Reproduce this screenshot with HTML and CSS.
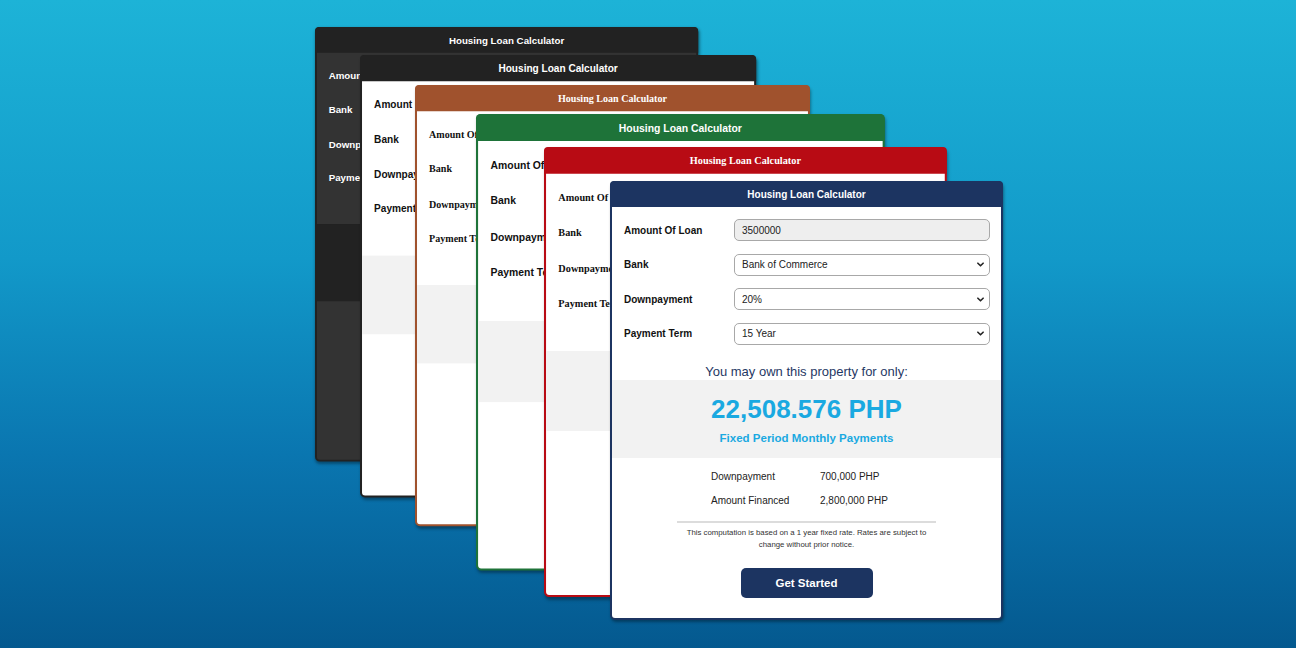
FILE: index.html
```html
<!DOCTYPE html>
<html lang="en">
<head>
<meta charset="utf-8">
<title>Housing Loan Calculator themes</title>
<link rel="stylesheet" href="styles.css">
</head>
<body>
<main class="stage">

  <section class="card theme-dark pos-1">
    <header class="card-head">Housing Loan Calculator</header>
    <div class="form">
      <div class="row"><span class="lbl">Amount Of Loan</span><div class="field field-ro">3500000</div></div>
      <div class="row"><span class="lbl">Bank</span><div class="field">Bank of Commerce<svg class="chev" viewBox="0 0 8 5" width="7" height="5"><path d="M1 1l3 3 3-3"/></svg></div></div>
      <div class="row"><span class="lbl">Downpayment</span><div class="field">20%<svg class="chev" viewBox="0 0 8 5" width="7" height="5"><path d="M1 1l3 3 3-3"/></svg></div></div>
      <div class="row"><span class="lbl">Payment Term</span><div class="field">15 Year<svg class="chev" viewBox="0 0 8 5" width="7" height="5"><path d="M1 1l3 3 3-3"/></svg></div></div>
    </div>
    <p class="lead">You may own this property for only:</p>
    <div class="band"><div class="amount">22,508.576 PHP</div><div class="sub">Fixed Period Monthly Payments</div></div>
    <div class="details"><span>Downpayment</span><span>700,000 PHP</span><span>Amount Financed</span><span>2,800,000 PHP</span></div>
    <hr class="divider">
    <p class="note">This computation is based on a 1 year fixed rate. Rates are subject to change without prior notice.</p>
    <button class="cta">Get Started</button>
  </section>

  <section class="card theme-black pos-2">
    <header class="card-head">Housing Loan Calculator</header>
    <div class="form">
      <div class="row"><span class="lbl">Amount Of Loan</span><div class="field field-ro">3500000</div></div>
      <div class="row"><span class="lbl">Bank</span><div class="field">Bank of Commerce<svg class="chev" viewBox="0 0 8 5" width="7" height="5"><path d="M1 1l3 3 3-3"/></svg></div></div>
      <div class="row"><span class="lbl">Downpayment</span><div class="field">20%<svg class="chev" viewBox="0 0 8 5" width="7" height="5"><path d="M1 1l3 3 3-3"/></svg></div></div>
      <div class="row"><span class="lbl">Payment Term</span><div class="field">15 Year<svg class="chev" viewBox="0 0 8 5" width="7" height="5"><path d="M1 1l3 3 3-3"/></svg></div></div>
    </div>
    <p class="lead">You may own this property for only:</p>
    <div class="band"><div class="amount">22,508.576 PHP</div><div class="sub">Fixed Period Monthly Payments</div></div>
    <div class="details"><span>Downpayment</span><span>700,000 PHP</span><span>Amount Financed</span><span>2,800,000 PHP</span></div>
    <hr class="divider">
    <p class="note">This computation is based on a 1 year fixed rate. Rates are subject to change without prior notice.</p>
    <button class="cta">Get Started</button>
  </section>

  <section class="card theme-brown serif pos-3">
    <header class="card-head">Housing Loan Calculator</header>
    <div class="form">
      <div class="row"><span class="lbl">Amount Of Loan</span><div class="field field-ro">3500000</div></div>
      <div class="row"><span class="lbl">Bank</span><div class="field">Bank of Commerce<svg class="chev" viewBox="0 0 8 5" width="7" height="5"><path d="M1 1l3 3 3-3"/></svg></div></div>
      <div class="row"><span class="lbl">Downpayment</span><div class="field">20%<svg class="chev" viewBox="0 0 8 5" width="7" height="5"><path d="M1 1l3 3 3-3"/></svg></div></div>
      <div class="row"><span class="lbl">Payment Term</span><div class="field">15 Year<svg class="chev" viewBox="0 0 8 5" width="7" height="5"><path d="M1 1l3 3 3-3"/></svg></div></div>
    </div>
    <p class="lead">You may own this property for only:</p>
    <div class="band"><div class="amount">22,508.576 PHP</div><div class="sub">Fixed Period Monthly Payments</div></div>
    <div class="details"><span>Downpayment</span><span>700,000 PHP</span><span>Amount Financed</span><span>2,800,000 PHP</span></div>
    <hr class="divider">
    <p class="note">This computation is based on a 1 year fixed rate. Rates are subject to change without prior notice.</p>
    <button class="cta">Get Started</button>
  </section>

  <section class="card theme-green pos-4">
    <header class="card-head">Housing Loan Calculator</header>
    <div class="form">
      <div class="row"><span class="lbl">Amount Of Loan</span><div class="field field-ro">3500000</div></div>
      <div class="row"><span class="lbl">Bank</span><div class="field">Bank of Commerce<svg class="chev" viewBox="0 0 8 5" width="7" height="5"><path d="M1 1l3 3 3-3"/></svg></div></div>
      <div class="row"><span class="lbl">Downpayment</span><div class="field">20%<svg class="chev" viewBox="0 0 8 5" width="7" height="5"><path d="M1 1l3 3 3-3"/></svg></div></div>
      <div class="row"><span class="lbl">Payment Term</span><div class="field">15 Year<svg class="chev" viewBox="0 0 8 5" width="7" height="5"><path d="M1 1l3 3 3-3"/></svg></div></div>
    </div>
    <p class="lead">You may own this property for only:</p>
    <div class="band"><div class="amount">22,508.576 PHP</div><div class="sub">Fixed Period Monthly Payments</div></div>
    <div class="details"><span>Downpayment</span><span>700,000 PHP</span><span>Amount Financed</span><span>2,800,000 PHP</span></div>
    <hr class="divider">
    <p class="note">This computation is based on a 1 year fixed rate. Rates are subject to change without prior notice.</p>
    <button class="cta">Get Started</button>
  </section>

  <section class="card theme-red serif pos-5">
    <header class="card-head">Housing Loan Calculator</header>
    <div class="form">
      <div class="row"><span class="lbl">Amount Of Loan</span><div class="field field-ro">3500000</div></div>
      <div class="row"><span class="lbl">Bank</span><div class="field">Bank of Commerce<svg class="chev" viewBox="0 0 8 5" width="7" height="5"><path d="M1 1l3 3 3-3"/></svg></div></div>
      <div class="row"><span class="lbl">Downpayment</span><div class="field">20%<svg class="chev" viewBox="0 0 8 5" width="7" height="5"><path d="M1 1l3 3 3-3"/></svg></div></div>
      <div class="row"><span class="lbl">Payment Term</span><div class="field">15 Year<svg class="chev" viewBox="0 0 8 5" width="7" height="5"><path d="M1 1l3 3 3-3"/></svg></div></div>
    </div>
    <p class="lead">You may own this property for only:</p>
    <div class="band"><div class="amount">22,508.576 PHP</div><div class="sub">Fixed Period Monthly Payments</div></div>
    <div class="details"><span>Downpayment</span><span>700,000 PHP</span><span>Amount Financed</span><span>2,800,000 PHP</span></div>
    <hr class="divider">
    <p class="note">This computation is based on a 1 year fixed rate. Rates are subject to change without prior notice.</p>
    <button class="cta">Get Started</button>
  </section>

  <section class="card theme-navy pos-6">
    <header class="card-head">Housing Loan Calculator</header>
    <div class="form">
      <div class="row"><span class="lbl">Amount Of Loan</span><div class="field field-ro">3500000</div></div>
      <div class="row"><span class="lbl">Bank</span><div class="field">Bank of Commerce<svg class="chev" viewBox="0 0 8 5" width="7" height="5"><path d="M1 1l3 3 3-3"/></svg></div></div>
      <div class="row"><span class="lbl">Downpayment</span><div class="field">20%<svg class="chev" viewBox="0 0 8 5" width="7" height="5"><path d="M1 1l3 3 3-3"/></svg></div></div>
      <div class="row"><span class="lbl">Payment Term</span><div class="field">15 Year<svg class="chev" viewBox="0 0 8 5" width="7" height="5"><path d="M1 1l3 3 3-3"/></svg></div></div>
    </div>
    <p class="lead">You may own this property for only:</p>
    <div class="band"><div class="amount">22,508.576 PHP</div><div class="sub">Fixed Period Monthly Payments</div></div>
    <div class="details"><span>Downpayment</span><span>700,000 PHP</span><span>Amount Financed</span><span>2,800,000 PHP</span></div>
    <hr class="divider">
    <p class="note">This computation is based on a 1 year fixed rate. Rates are subject to change without prior notice.</p>
    <button class="cta">Get Started</button>
  </section>

</main>
</body>
</html>
```
FILE: styles.css
```css
* { box-sizing: border-box; }

html, body {
  margin: 0;
  padding: 0;
}

body {
  font-family: "Liberation Sans", Arial, sans-serif;
}

.stage {
  position: relative;
  width: 1296px;
  height: 648px;
  overflow: hidden;
  background: linear-gradient(180deg, #1db3d7 0%, #1299c9 40%, #0a76b0 70%, #04598f 100%);
}

/* ---------- card ---------- */
.card {
  --theme: #1c3461;
  position: absolute;
  width: 393px;
  height: 439px;
  display: flex;
  flex-direction: column;
  background: #fff;
  border: 2px solid var(--theme);
  border-radius: 5px;
  box-shadow: 1px 2px 3px rgba(0, 0, 0, 0.35);
  transform-origin: 0 0;
  color: #111;
}

.card-head {
  height: 26px;
  line-height: 24px;
  margin: -2px -2px 0;
  padding-top: 2px;
  background: var(--theme);
  color: #fff;
  font-size: 10px;
  font-weight: bold;
  text-align: center;
  border-radius: 4px 4px 0 0;
}

.form {
  display: flex;
  flex-direction: column;
  gap: 12.67px;
  padding: 12px 11px 0 12px;
}

.row {
  display: grid;
  grid-template-columns: 110px 1fr;
  align-items: center;
  height: 22px;
}

.lbl {
  font-size: 10px;
  font-weight: bold;
  white-space: nowrap;
}

.field {
  height: 22px;
  display: flex;
  align-items: center;
  justify-content: space-between;
  padding: 0 5px 0 7px;
  border: 1.5px solid #a8a8a8;
  border-radius: 5px;
  background: #fff;
  font-size: 10px;
  color: #222;
}

.field-ro {
  background: #eeeeee;
}

.chev {
  fill: none;
  stroke: #222;
  stroke-width: 1.8;
  stroke-linecap: round;
  stroke-linejoin: round;
}

.lead {
  margin: 19px 0 0;
  font-size: 13px;
  line-height: 16px;
  text-align: center;
  color: #1f3864;
}

.band {
  height: 78px;
  background: #f2f2f2;
  text-align: center;
  padding-top: 14px;
}

.amount {
  font-size: 26px;
  line-height: 30px;
  font-weight: bold;
  color: #1aa9e1;
  font-family: "Liberation Sans", Arial, sans-serif;
}

.sub {
  margin-top: 7px;
  font-size: 11.5px;
  line-height: 14px;
  font-weight: bold;
  color: #1aa9e1;
  font-family: "Liberation Sans", Arial, sans-serif;
}

.details {
  display: grid;
  grid-template-columns: 109px auto;
  justify-content: start;
  row-gap: 10px;
  padding: 12px 0 0 99px;
  font-size: 10px;
  line-height: 14px;
  color: #222;
}

.divider {
  width: 259px;
  height: 2px;
  margin: 13px auto 0;
  border: 0;
  background: #dcdcdc;
}

.note {
  width: 259px;
  margin: 4px auto 0;
  font-size: 7.8px;
  line-height: 12px;
  text-align: center;
  color: #333;
}

.cta {
  align-self: center;
  width: 132px;
  height: 30px;
  margin-top: 17px;
  border: 0;
  border-radius: 5px;
  background: #1c3461;
  color: #fff;
  font-family: "Liberation Sans", Arial, sans-serif;
  font-size: 11.5px;
  font-weight: bold;
}

/* ---------- themes ---------- */
.theme-dark { --theme: #222222; background: #333333; }
.theme-dark .lbl,
.theme-dark .lead,
.theme-dark .details { color: #fff; }
.theme-dark .band { background: #222222; }

.theme-black { --theme: #222222; }
.theme-brown { --theme: #a0522d; }
.theme-green { --theme: #1e7339; }
.theme-red   { --theme: #b80b14; }
.theme-navy  { --theme: #1c3461; }

.serif .card-head,
.serif .lbl {
  font-family: "Liberation Serif", "Times New Roman", serif;
}

/* ---------- placement on the stack ---------- */
.pos-1 { left: 315px; top: 27px;  transform: scale(0.975, 0.99); }
.pos-2 { left: 360px; top: 55px;  transform: scale(1.008); }
.pos-3 { left: 415px; top: 85px;  transform: scale(1.005); }
.pos-4 { left: 476px; top: 114px; transform: scale(1.04); }
.pos-5 { left: 544px; top: 147px; transform: scale(1.025); }
.pos-6 { left: 610px; top: 181px; }
```
